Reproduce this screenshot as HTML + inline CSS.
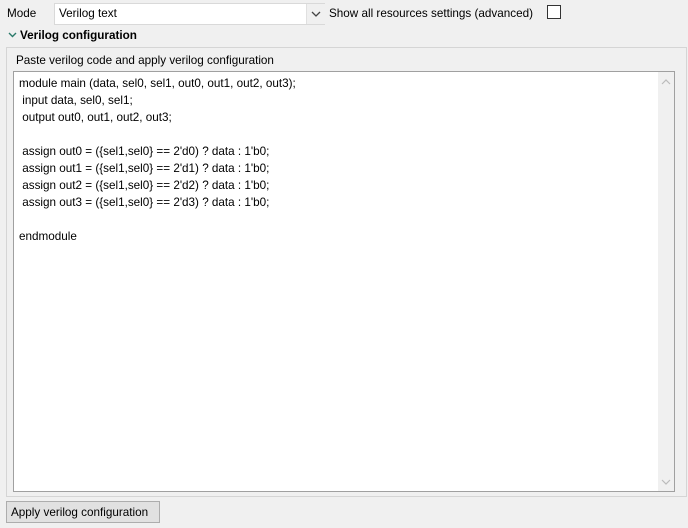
<!DOCTYPE html>
<html><head><style>
body{margin:0;width:688px;height:528px;background:#f0f0f0;font-family:"Liberation Sans",sans-serif;font-size:11.7px;color:#000;position:relative;overflow:hidden}
.a{position:absolute}
</style></head><body>
<div class="a" style="left:7px;top:7px">Mode</div>
<div class="a" style="left:54px;top:3px;width:269px;height:20px;background:#fff;border:1px solid #d9d9d9"></div>
<div class="a" style="left:59px;top:7px">Verilog text</div>
<div class="a" style="left:306px;top:4px;width:18px;height:20px;background:#f0f0f0;border-left:1px solid #e0e0e0"></div>
<svg class="a" style="left:311px;top:10px" width="10" height="8"><path d="M1 2 L5 6 L9 2" stroke="#444" fill="none" stroke-width="1.3"/></svg>
<div class="a" style="left:329px;top:7px">Show all resources settings (advanced)</div>
<div class="a" style="left:547px;top:5px;width:12px;height:12px;background:#fff;border:1px solid #333"></div>
<svg class="a" style="left:8px;top:31px" width="9" height="8"><path d="M1 2 L4.5 5.5 L8 2" stroke="#2a7a6a" fill="none" stroke-width="1.4"/></svg>
<div class="a" style="left:20px;top:29px;font-weight:bold">Verilog configuration</div>
<div class="a" style="left:6px;top:47px;width:679px;height:448px;border:1px solid #d5d5d5"></div>
<div class="a" style="left:16px;top:54px">Paste verilog code and apply verilog configuration</div>
<div class="a" style="left:13px;top:71px;width:660px;height:419px;background:#fff;border:1px solid #a0a0a0"></div>
<div class="a" style="left:658px;top:72px;width:16px;height:419px;background:#f0f0f0"></div>
<svg class="a" style="left:661px;top:78px" width="10" height="8"><path d="M1 6 L5 2 L9 6" stroke="#bbb" fill="none" stroke-width="1.2"/></svg>
<svg class="a" style="left:661px;top:478px" width="10" height="8"><path d="M1 2 L5 6 L9 2" stroke="#bbb" fill="none" stroke-width="1.2"/></svg>
<pre class="a" style="left:19px;top:75px;margin:0;font-family:inherit;font-size:11.7px;line-height:17px">module main (data, sel0, sel1, out0, out1, out2, out3);
 input data, sel0, sel1;
 output out0, out1, out2, out3;

 assign out0 = ({sel1,sel0} == 2'd0) ? data : 1'b0;
 assign out1 = ({sel1,sel0} == 2'd1) ? data : 1'b0;
 assign out2 = ({sel1,sel0} == 2'd2) ? data : 1'b0;
 assign out3 = ({sel1,sel0} == 2'd3) ? data : 1'b0;

endmodule</pre>
<div class="a" style="left:6px;top:501px;width:152px;height:20px;background:#e1e1e1;border:1px solid #adadad"></div>
<div class="a" style="left:11px;top:506px">Apply verilog configuration</div>
</body></html>
